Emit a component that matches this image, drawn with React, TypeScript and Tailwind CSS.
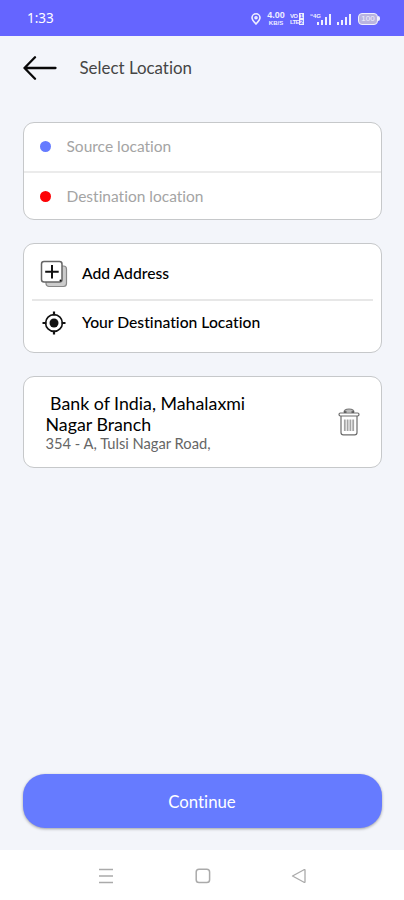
import type { ReactNode } from 'react';

interface CardProps {
    children: ReactNode;
    className: string;
}

const Card = ({ children, className }: CardProps) => {
    return (
        <section
            className={`w-[359px] shrink-0 rounded-[11px] border border-[#c6c8ca] bg-white ${className}`}
        >
            {children}
        </section>
    );
};

const SignalBars = () => {
    return (
        <svg width="14" height="12" viewBox="0 0 14 12" fill="#fff">
            <rect x="0" y="9" width="2" height="3" />
            <rect x="4" y="7" width="2" height="5" />
            <rect x="8" y="4" width="2" height="8" />
            <rect x="12" y="1" width="2" height="11" />
        </svg>
    );
};

const StatusBar = () => {
    return (
        <header className="flex h-[36px] shrink-0 items-center bg-[#6565ff] pl-[27px] pr-[24px] text-white">
            <span className="pt-[2px] font-['Noto_Sans',sans-serif] text-[13.5px] leading-none">
                1:33
            </span>
            <div className="ml-auto flex items-center pt-px font-['Liberation_Sans',sans-serif] opacity-90">
                <svg width="10" height="12" viewBox="0 0 10 12" fill="none" stroke="#fff" strokeWidth="1.6">
                    <path d="M5 11C2.8 8.8 1 7 1 4.8a4 4 0 0 1 8 0C9 7 7.2 8.8 5 11z" />
                    <circle cx="5" cy="4.8" r="1" />
                </svg>
                <div className="ml-[5px] flex w-[20px] flex-col items-center font-bold leading-none">
                    <span className="text-[9px] leading-[9px]">4.00</span>
                    <span className="text-[6px] leading-[6px]">KB/S</span>
                </div>
                <div className="ml-[4px] flex h-[12px] w-[14px] items-stretch">
                    <div className="flex w-[9px] flex-col overflow-hidden text-[6px] font-bold leading-[6px] tracking-[-0.7px]">
                        <span>VO</span>
                        <span>LTE</span>
                    </div>
                    <div className="flex w-[5px] flex-col items-center bg-white text-[6px] font-bold leading-[6px] text-[#6565ff]">
                        <span>1</span>
                        <span>2</span>
                    </div>
                </div>
                <span className="ml-[6px] -mr-[3px] -mt-[6px] w-[10px] whitespace-nowrap text-[6px] font-bold leading-none">
                    “4G
                </span>
                <SignalBars />
                <span className="w-[6px]" />
                <SignalBars />
                <div className="ml-[7px] flex h-[12px] w-[20px] items-center justify-center rounded-[4px] border border-white bg-[#c3bddd] text-[8px] leading-none">
                    100
                </div>
                <span className="h-[5px] w-[2px] rounded-r bg-white" />
            </div>
        </header>
    );
};

const TrashIcon = () => {
    return (
        <svg width="22" height="28" viewBox="0 0 22 28" fill="none" stroke="#6c6c6c" strokeWidth="1.2">
            <path d="M6 4.5C6 2 8 1 11 1s5 1 5 3.5" fill="#bbb" stroke="#777" />
            <path d="M6 4.2h2.5M13.5 4.2H16" stroke="#555" strokeWidth="1.8" />
            <rect x="1" y="5" width="20" height="3" rx="1.4" />
            <path d="M3 8V24.5c0 1.4.8 2.4 2.3 2.4h11.4c1.5 0 2.3-1 2.3-2.4V8" />
            <path d="M6.8 11.5v11.5M9.6 11.5v11.5M12.4 11.5v11.5M15.2 11.5v11.5" stroke="#a5a5a5" strokeWidth="1.8" />
        </svg>
    );
};

const App = () => {
    return (
        <main className="flex h-[900px] w-[404px] flex-col overflow-hidden bg-[#f3f5fa] font-['Lato',sans-serif] [font-variant-ligatures:none]">
            <StatusBar />

            <div className="flex h-[64px] shrink-0 items-center pl-[23px]">
                <svg width="35" height="24" viewBox="0 0 35 24" fill="none" stroke="#080808" strokeWidth="2.3" strokeLinecap="round" strokeLinejoin="round">
                    <path d="M12 1.3 1.5 12 12 22.7M1.5 12h31" />
                </svg>
                <h1 className="ml-[21.5px] text-[16.9px] leading-none text-[#454545]">
                    Select Location
                </h1>
            </div>

            <div className="flex flex-1 flex-col items-center pt-[22px]">
                <Card className="h-[98px]">
                    <div className="flex h-[50px] items-center border-b-2 border-[#ebebeb] pb-px pl-[16px]">
                        <span className="size-[11px] rounded-full bg-[#657bff]" />
                        <span className="ml-[16px] text-[15.5px] leading-none text-[#a4a4a4]">
                            Source location
                        </span>
                    </div>
                    <div className="flex h-[46px] items-center pl-[16px]">
                        <span className="size-[11px] rounded-full bg-[#fd0205]" />
                        <span className="ml-[16px] pt-px text-[15.5px] leading-none text-[#a4a4a4]">
                            Destination location
                        </span>
                    </div>
                </Card>

                <Card className="mt-[23px] h-[110px] px-[8px]">
                    <div className="flex h-[57px] items-center border-b-2 border-[#e7e7e7] pl-[8px] pt-[4px]">
                        <svg width="28" height="28" viewBox="0 0 28 28" fill="none">
                            <rect x="6" y="6" width="20.5" height="20.5" rx="3" fill="#ccc" stroke="#888" strokeWidth="1.2" />
                            <rect x="1.5" y="1.5" width="20.5" height="20.5" rx="2.5" fill="#fff" stroke="#666" strokeWidth="1.5" />
                            <path d="M12 5v13.5M5.2 11.7h13.5" stroke="#111" strokeWidth="2" />
                            <circle cx="20.5" cy="20.5" r="1" fill="#111" />
                        </svg>
                        <span className="ml-[14.5px] text-[15.7px] font-medium leading-none text-black">
                            Add Address
                        </span>
                    </div>
                    <div className="flex h-[43px] items-center pl-[10px]">
                        <svg width="24" height="24" viewBox="0 0 24 24" fill="none" stroke="#111" strokeWidth="1.6">
                            <circle cx="12" cy="12" r="8.4" />
                            <circle cx="12" cy="12" r="4.5" fill="#111" stroke="none" />
                            <path d="M12 .5v4M12 19.5v4M.5 12h4M19.5 12h4" strokeWidth="2.2" />
                        </svg>
                        <span className="ml-[16.5px] text-[15.7px] font-medium leading-none text-black">
                            Your Destination Location
                        </span>
                    </div>
                </Card>

                <Card className="mt-[23px] flex h-[92px] items-center pl-[22px] pr-[21px]">
                    <div>
                        <h2 className="whitespace-pre text-[17.8px] leading-[21px] text-black">
                            {' Bank of India, Mahalaxmi\nNagar Branch'}
                        </h2>
                        <p className="text-[14.7px] leading-[16px] text-[#666]">
                            354 - A, Tulsi Nagar Road,
                        </p>
                    </div>
                    <button type="button" className="ml-auto" aria-label="Delete">
                        <TrashIcon />
                    </button>
                </Card>

                <button
                    type="button"
                    className="mb-[22px] mt-auto h-[54px] w-[359px] rounded-[22px] bg-[#667bff] pt-px text-[16.8px] text-white shadow-[0_1px_3px_rgba(0,0,0,0.35)]"
                >
                    Continue
                </button>
            </div>

            <nav className="flex h-[50px] shrink-0 items-center justify-between bg-white pl-[98px] pr-[97px] pt-px">
                <svg width="16" height="16" viewBox="0 0 16 16" stroke="#aaa" strokeWidth="1.5">
                    <path d="M1 1.5h14M1 8h14M1 14.5h14" />
                </svg>
                <svg width="16" height="16" viewBox="0 0 16 16" fill="none" stroke="#aaa" strokeWidth="1.5">
                    <rect x="1.2" y="1.2" width="13.4" height="13.4" rx="2.8" />
                </svg>
                <svg width="16" height="16" viewBox="0 0 16 16" fill="none" stroke="#aaa" strokeWidth="1.3" strokeLinejoin="round">
                    <path d="M1.5 8 13 1.7q1-.5 1 .6v11.4q0 1.1-1 .6z" />
                </svg>
            </nav>
        </main>
    );
};

export default App;
